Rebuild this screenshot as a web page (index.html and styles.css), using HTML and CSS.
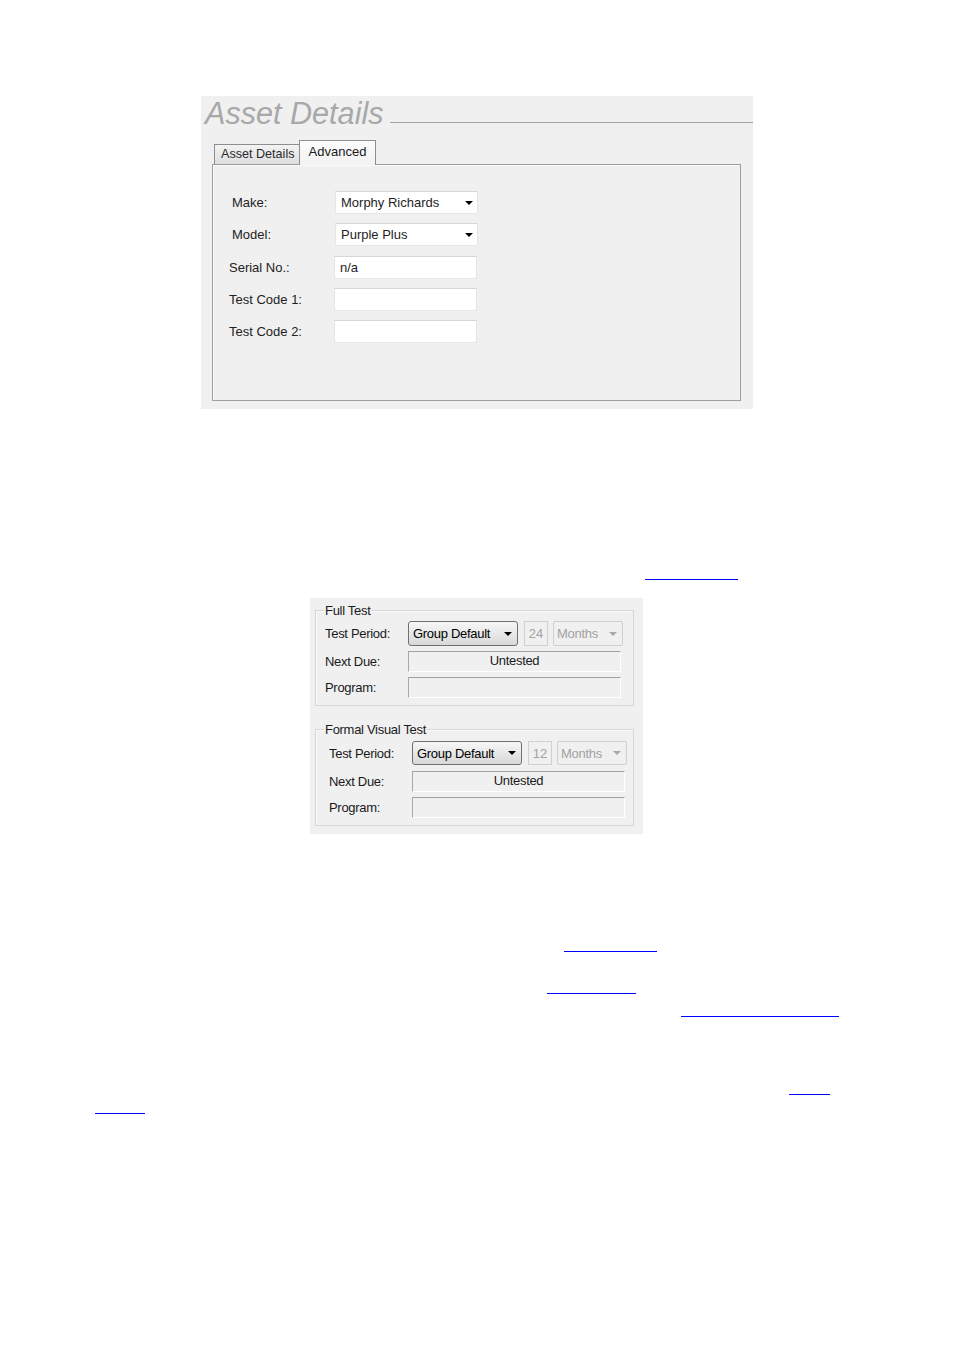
FILE: index.html
```html
<!DOCTYPE html>
<html lang="en">
<head>
<meta charset="utf-8">
<title>Asset Details</title>
<link rel="stylesheet" href="styles.css">
</head>
<body>
<main class="page">
  <section class="shot shot-asset">
    <div class="title-row">
      <h1 class="title">Asset Details</h1>
      <div class="title-rule"></div>
    </div>
    <div class="tabs">
      <div class="tab">Asset Details</div>
      <div class="tab active">Advanced</div>
    </div>
    <div class="panel">
      <div class="form">
        <div class="lbl ind">Make:</div>
        <div class="fld combo ind"><span>Morphy Richards</span><i class="arr"></i></div>
        <div class="lbl ind">Model:</div>
        <div class="fld combo ind"><span>Purple Plus</span><i class="arr"></i></div>
        <div class="lbl">Serial No.:</div>
        <div class="fld"><span>n/a</span></div>
        <div class="lbl">Test Code 1:</div>
        <div class="fld"></div>
        <div class="lbl">Test Code 2:</div>
        <div class="fld"></div>
      </div>
    </div>
  </section>

  <div class="ul ul1"></div>

  <section class="shot shot-test">
    <div class="grp g1">
      <div class="legend">Full Test</div>
      <div class="grid">
        <div class="lbl2">Test Period:</div>
        <div class="ctrls">
          <div class="btncombo"><span>Group Default</span><i class="arr"></i></div>
          <div class="num">24</div>
          <div class="dis"><span>Months</span><i class="arr gray"></i></div>
        </div>
        <div class="lbl2">Next Due:</div>
        <div class="box">Untested</div>
        <div class="lbl2">Program:</div>
        <div class="box"></div>
      </div>
    </div>
    <div class="grp g2">
      <div class="legend">Formal Visual Test</div>
      <div class="grid">
        <div class="lbl2">Test Period:</div>
        <div class="ctrls">
          <div class="btncombo"><span>Group Default</span><i class="arr"></i></div>
          <div class="num">12</div>
          <div class="dis"><span>Months</span><i class="arr gray"></i></div>
        </div>
        <div class="lbl2">Next Due:</div>
        <div class="box">Untested</div>
        <div class="lbl2">Program:</div>
        <div class="box"></div>
      </div>
    </div>
  </section>

  <div class="ul ul2"></div>
  <div class="ul ul3"></div>
  <div class="ul ul4"></div>
  <div class="ul ul5"></div>
  <div class="ul ul6"></div>
</main>
</body>
</html>
```

FILE: styles.css
```css
html, body {
  margin: 0;
  padding: 0;
  background: #ffffff;
}

.page {
  padding-top: 96px;
  font-family: "Liberation Sans", Arial, sans-serif;
  font-size: 13px;
  color: #1e1e1e;
}

.shot {
  box-sizing: border-box;
  background: #f0f0f0;
}

/* ---------- Asset Details dialog ---------- */
.shot-asset {
  margin-left: 201px;
  width: 552px;
  height: 313px;
  padding-top: 2px;
}

.title-row {
  display: flex;
  padding-left: 4px;
}

.title {
  margin: 0;
  font-family: "Liberation Sans", Arial, sans-serif;
  font-style: italic;
  font-weight: normal;
  font-size: 30.6px;
  line-height: 30px;
  color: #a8a8a8;
  white-space: nowrap;
}

.title-rule {
  flex: 1;
  height: 24px;
  margin-left: 6px;
  border-bottom: 1px solid #a4a4a4;
}

.tabs {
  display: flex;
  align-items: flex-end;
  height: 24px;
  margin: 12px 0 0 13px;
}

.tab {
  box-sizing: border-box;
  width: 86px;
  height: 20px;
  padding-left: 6px;
  border: 1px solid #8e8e8e;
  border-bottom: none;
  background: linear-gradient(#f3f3f3, #dedede);
  font-size: 12.6px;
  line-height: 19px;
  color: #2a2a2a;
  white-space: nowrap;
}

.tab.active {
  position: relative;
  z-index: 1;
  width: 77px;
  height: 25px;
  margin-bottom: -1px;
  margin-left: -1px;
  padding: 2px 0 0 0;
  text-align: center;
  font-size: 13px;
  line-height: 18px;
  color: #1a1a1a;
  background: linear-gradient(#fcfcfc, #f2f2f2);
}

.panel {
  box-sizing: border-box;
  margin-left: 11px;
  width: 529px;
  height: 237px;
  border: 1px solid #9f9f9f;
  box-shadow: inset 1px 1px 0 #fafafa;
  padding: 26px 0 0 16px;
}

.form {
  display: grid;
  grid-template-columns: 105px 143px;
  grid-auto-rows: 23px;
  row-gap: 9.25px;
  align-items: center;
}

.lbl {
  font-size: 13px;
  color: #222;
  white-space: nowrap;
}

.lbl.ind {
  padding-left: 3px;
}

.fld {
  box-sizing: border-box;
  height: 23px;
  width: 143px;
  display: flex;
  align-items: center;
  justify-content: space-between;
  padding: 0 4px 0 5px;
  background: #ffffff;
  border: 1px solid #e6e6e6;
  border-top-color: #d6d6d6;
  font-size: 13px;
  color: #1e1e1e;
}

.fld.ind {
  margin-left: 1px;
}

.arr {
  display: block;
  width: 0;
  height: 0;
  border-left: 4px solid transparent;
  border-right: 4px solid transparent;
  border-top: 4px solid #000;
}

.arr.gray {
  border-top-color: #a8a8a8;
}

/* ---------- Test period panel ---------- */
.shot-test {
  margin-top: 18px;
  margin-left: 310px;
  width: 333px;
  height: 236px;
  padding: 12px 0 0 5px;
}

.grp {
  box-sizing: border-box;
  width: 319px;
  border: 1px solid #d6d6d6;
  box-shadow: inset 1px 1px 0 #fbfbfb;
}

.g2 {
  margin-top: 23px;
}

.legend {
  width: max-content;
  margin: -8px 0 0 8px;
  padding: 0 1px;
  background: #f0f0f0;
  line-height: 15px;
  font-size: 13px;
  letter-spacing: -0.3px;
  color: #1a1a1a;
}

.grid {
  display: grid;
  grid-template-columns: 83px 215px;
  grid-template-rows: 25px 21px 21px;
  row-gap: 5px;
  align-items: center;
  margin-top: 3px;
  padding: 0 0 7px 9px;
}

.g2 .grid {
  grid-template-rows: 24px 21px 21px;
  row-gap: 5.5px;
  margin-top: 4px;
  padding-left: 13px;
}

.lbl2 {
  font-size: 13px;
  letter-spacing: -0.3px;
  color: #1a1a1a;
  white-space: nowrap;
}

.ctrls {
  display: flex;
  height: 100%;
}

.btncombo {
  box-sizing: border-box;
  width: 110px;
  height: 100%;
  display: flex;
  align-items: center;
  justify-content: space-between;
  padding: 0 5px 0 4px;
  border: 1px solid #707070;
  border-radius: 3px;
  background: linear-gradient(#f6f6f6, #e8e8e8 50%, #d8d8d8);
  font-size: 13px;
  letter-spacing: -0.3px;
  color: #000;
  white-space: nowrap;
}

.num {
  box-sizing: border-box;
  width: 24px;
  height: 100%;
  margin-left: 6px;
  border: 1px solid #d0d0d0;
  text-align: center;
  display: flex;
  align-items: center;
  justify-content: center;
  font-size: 13px;
  color: #a2a2a2;
}

.dis {
  box-sizing: border-box;
  width: 70px;
  height: 100%;
  margin-left: 5px;
  display: flex;
  align-items: center;
  justify-content: space-between;
  padding: 0 5px 0 3px;
  border: 1px solid #d0d0d0;
  border-radius: 2px;
  font-size: 13px;
  letter-spacing: -0.3px;
  color: #a2a2a2;
}

.box {
  box-sizing: border-box;
  width: 213px;
  height: 21px;
  border-top: 1px solid #a0a0a0;
  border-left: 1px solid #a8a8a8;
  border-right: 1px solid #ffffff;
  border-bottom: 1px solid #ffffff;
  background: #f0f0f0;
  text-align: center;
  line-height: 17px;
  font-size: 13px;
  letter-spacing: -0.3px;
  color: #1a1a1a;
}

/* ---------- link underlines ---------- */
.ul {
  height: 1px;
  background: #0000ff;
}

.ul1 { margin-top: 170px; margin-left: 645px; width: 93px; }
.ul2 { margin-top: 117px; margin-left: 564px; width: 93px; }
.ul3 { margin-top: 41px;  margin-left: 547px; width: 89px; }
.ul4 { margin-top: 22px;  margin-left: 681px; width: 158px; }
.ul5 { margin-top: 77px;  margin-left: 789px; width: 41px; }
.ul6 { margin-top: 18px;  margin-left: 95px;  width: 50px; }
```
